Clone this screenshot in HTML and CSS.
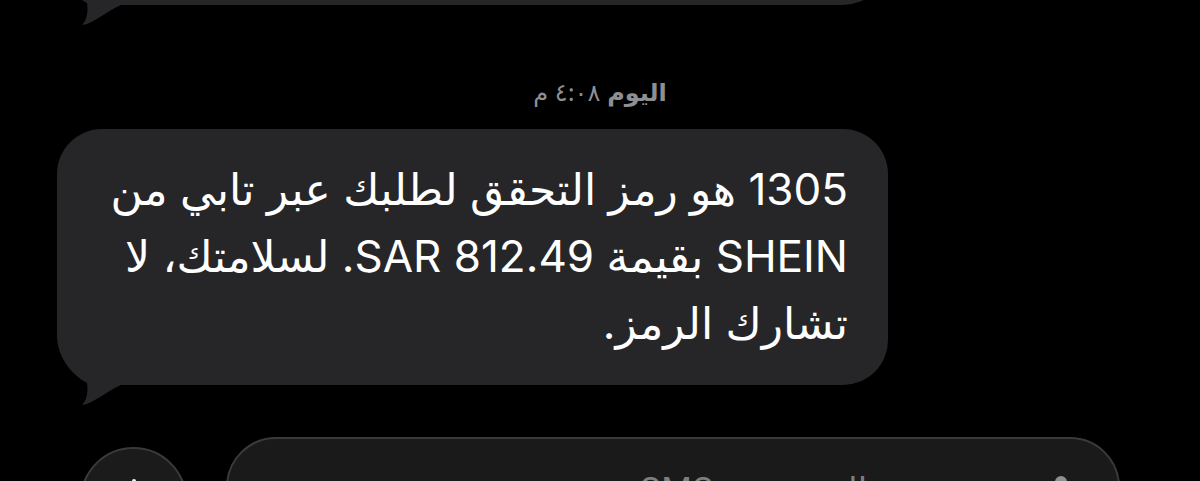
FILE: index.html
```html
<!DOCTYPE html>
<html lang="ar">
<head>
<meta charset="utf-8">
<title>Messages</title>
<link rel="stylesheet" href="styles.css">
</head>
<body>
<div class="screen">
  <div class="bubble bubble-prev">
    <svg class="tail" viewBox="0 0 70 80" width="70" height="80" aria-hidden="true">
      <path d="M0,0 L0,10 C0,30 12,48 30,58 C31,64 31,74 25,80 C36,79 48,67 64,60 L70,60 L70,0 Z"/>
    </svg>
  </div>

  <div class="stamp" dir="rtl"><span class="stamp-day">اليوم</span> ٤:٠٨ م</div>

  <div class="bubble bubble-main">
    <p class="msg" dir="rtl">1305 هو رمز التحقق لطلبك عبر تابي من<br>SHEIN بقيمة SAR 812.49. لسلامتك، لا<br>تشارك الرمز.</p>
    <svg class="tail" viewBox="0 0 70 80" width="70" height="80" aria-hidden="true">
      <path d="M0,0 L0,10 C0,30 12,48 30,58 C31,64 31,74 25,80 C36,79 48,67 64,60 L70,60 L70,0 Z"/>
    </svg>
  </div>

  <div class="composer">
    <div class="plus-btn">
      <svg viewBox="0 0 44 44" width="44" height="44" aria-hidden="true">
        <path d="M22 2 V42 M2 22 H42" stroke="#f2f2f2" stroke-width="4" stroke-linecap="round" fill="none"/>
      </svg>
    </div>
    <div class="field">
      <span class="placeholder" dir="rtl">رسالة نصية • SMS</span>
      <svg class="mic" viewBox="0 0 16 40" width="16" height="40" aria-hidden="true">
        <rect x="2" y="0" width="12" height="30" rx="6" fill="#8e8e93"/>
      </svg>
    </div>
  </div>
</div>
</body>
</html>
```

FILE: styles.css
```css
html, body {
  margin: 0;
  padding: 0;
  background: #000;
}

body {
  width: 1200px;
  height: 481px;
  overflow: hidden;
  font-family: "Inter", "DejaVu Sans", sans-serif;
}

.screen {
  width: 1200px;
  height: 481px;
  overflow: hidden;
}

.bubble {
  position: relative;
  box-sizing: border-box;
  width: 831px;
  margin-left: 57px;
  background: #262628;
  border-radius: 45px 45px 45px 60px;
}

.tail {
  position: absolute;
  left: 0;
  bottom: -20px;
  fill: #262628;
  display: block;
}

.bubble-prev {
  height: 120px;
  margin-top: -115px;
}

.stamp {
  margin-top: 74px;
  height: 28px;
  line-height: 28px;
  text-align: center;
  font-size: 24px;
  color: #8e8e93;
}

.stamp-day {
  font-weight: 600;
}

.bubble-main {
  margin-top: 22px;
  height: 256px;
  padding: 27px 40px 0 40px;
}

.msg {
  margin: 0;
  color: #fff;
  font-size: 44px;
  line-height: 67px;
  text-align: right;
  white-space: nowrap;
}

.composer {
  display: flex;
  align-items: flex-start;
  gap: 39px;
  margin-top: 52px;
  padding-left: 80px;
}

.plus-btn {
  box-sizing: border-box;
  flex: none;
  width: 107px;
  height: 107px;
  margin-top: 10px;
  border-radius: 50%;
  background: #1b1b1c;
  border: 2px solid #3a3a3c;
  display: flex;
  align-items: center;
  justify-content: center;
}

.field {
  box-sizing: border-box;
  flex: none;
  width: 894px;
  height: 100px;
  border-radius: 50px;
  background: #1a1a1b;
  border: 2px solid #3a3a3c;
  display: flex;
  align-items: flex-start;
  justify-content: flex-end;
  gap: 140px;
  padding: 34px 49px 0 0;
}

.placeholder {
  font-size: 34px;
  line-height: 34px;
  color: #7d7d82;
  white-space: nowrap;
}

.mic {
  display: block;
  margin-top: 3px;
}
```
